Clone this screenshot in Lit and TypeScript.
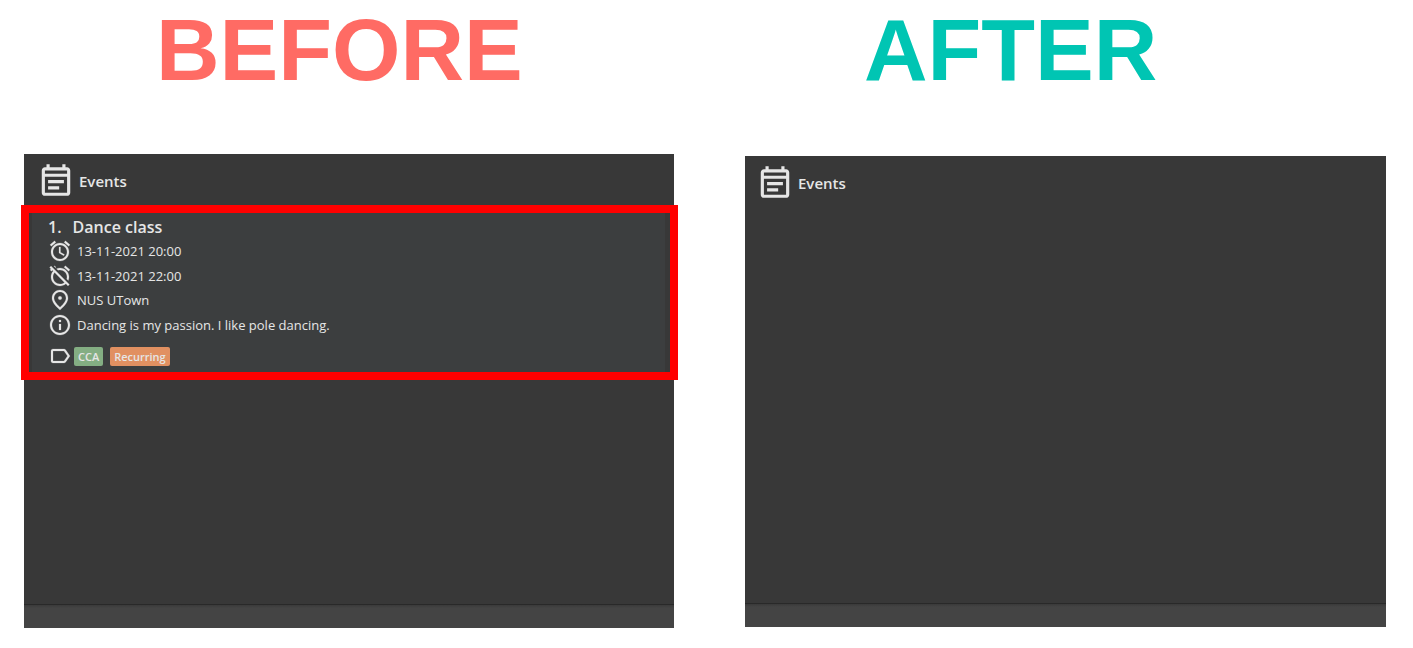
import { LitElement, html, css, svg } from "lit";
import { customElement, property } from "lit/decorators.js";

const ICONS = {
  events: svg`<path d="M19 4h-1V2h-2v2H8V2H6v2H5c-1.11 0-1.99.9-1.99 2L3 20c0 1.1.89 2 2 2h14c1.1 0 2-.9 2-2V6c0-1.1-.9-2-2-2zm0 16H5V10h14v10zm0-12H5V6h14v2zM7 12h10v2H7zm0 4h7v2H7z"/>`,
  start: svg`<path d="M22 5.72l-4.6-3.86-1.29 1.53 4.6 3.86L22 5.72zM7.88 3.39L6.6 1.86 2 5.71l1.29 1.53 4.59-3.85zM12.5 8H11v6l4.75 2.85.75-1.23-4-2.37V8zM12 4c-4.97 0-9 4.03-9 9s4.02 9 9 9c4.97 0 9-4.03 9-9s-4.03-9-9-9zm0 16c-3.87 0-7-3.13-7-7s3.13-7 7-7 7 3.13 7 7-3.13 7-7 7z"/>`,
  end: svg`<path d="M10.04 6.29C10.66 6.11 11.32 6 12 6c3.86 0 7 3.14 7 7 0 .68-.11 1.34-.29 1.96l1.56 1.56c.47-1.08.73-2.27.73-3.52 0-4.97-4.03-9-9-9-1.25 0-2.44.26-3.53.72l1.57 1.57zm7.297-4.48l4.607 3.845-1.28 1.535-4.61-3.843zM3.02 2.1L1.61 3.51l1.37 1.37-.92.77 1.28 1.54 1.06-.88.8.8C3.83 8.69 3 10.75 3 13c0 4.97 4.03 9 9 9 2.25 0 4.31-.83 5.89-2.2l2.1 2.1 1.41-1.41L3.02 2.1zM12 20c-3.86 0-7-3.14-7-7 0-1.7.61-3.26 1.62-4.47l9.85 9.85C15.26 19.39 13.7 20 12 20zM7.48 3.73l.46-.38-1.28-1.54-.6.5z"/>`,
  place: svg`<path d="M12 2C7.8 2 4 5.2 4 10.2c0 3.3 2.7 7.2 8 11.8 5.3-4.6 8-8.5 8-11.8C20 5.2 16.2 2 12 2zm0 17.3c-4-3.7-6-6.7-6-9.1C6 6.6 8.65 4 12 4s6 2.6 6 6.2c0 2.4-2 5.4-6 9.1z"/><circle cx="12" cy="10" r="1.8"/>`,
  info: svg`<path d="M11 7h2v2h-2zm0 4h2v6h-2zm1-9C6.48 2 2 6.48 2 12s4.48 10 10 10 10-4.48 10-10S17.52 2 12 2zm0 18c-4.41 0-8-3.59-8-8s3.59-8 8-8 8 3.59 8 8-3.59 8-8 8z"/>`,
  label: svg`<path d="M17.63 5.84C17.27 5.33 16.67 5 16 5L5 5.01C3.9 5.01 3 5.9 3 7v10c0 1.1.9 1.99 2 1.99L16 19c.67 0 1.27-.33 1.63-.84L22 12l-4.37-6.16zM16 17H5V7h11l3.55 5L16 17z"/>`,
};

type IconName = keyof typeof ICONS;

interface Tag {
  text: string;
  tone: string;
}

interface CalendarEvent {
  title: string;
  details: { icon: IconName; text: string }[];
  tags: Tag[];
}

const DANCE_CLASS: CalendarEvent = {
  title: "Dance class",
  details: [
    { icon: "start", text: "13-11-2021 20:00" },
    { icon: "end", text: "13-11-2021 22:00" },
    { icon: "place", text: "NUS UTown" },
    { icon: "info", text: "Dancing is my passion. I like pole dancing." },
  ],
  tags: [
    { text: "CCA", tone: "green" },
    { text: "Recurring", tone: "orange" },
  ],
};

const icon = (name: IconName) =>
  html`<svg class="icon" viewBox="0 0 24 24" aria-hidden="true">${ICONS[name]}</svg>`;

@customElement("events-panel")
export class EventsPanel extends LitElement {
  @property({ attribute: false }) events: CalendarEvent[] = [];

  static styles = css`
    :host {
      display: flex;
      flex-direction: column;
      background: #383838;
      color: #e6e6e6;
      font-family: "Open Sans", sans-serif;
    }
    .icon {
      flex: none;
      width: 24px;
      height: 24px;
      fill: currentColor;
      stroke: currentColor;
      stroke-width: 0.2;
    }
    .header {
      display: flex;
      align-items: center;
      gap: 4px;
      height: 51px;
      padding-left: var(--header-inset, 13px);
    }
    .header .icon {
      width: 38px;
      height: 38px;
      stroke: none;
    }
    .name {
      margin: 0;
      font-size: 15px;
      line-height: 20px;
      font-weight: 600;
      padding-top: 2px;
    }
    .events {
      list-style: none;
      margin: 0 -4px 0 -3px;
      padding: 0;
    }
    .event {
      border: 8px solid #ff0000;
      padding: 0 5px 0 3px;
    }
    .card {
      background: #3c3e3f;
      padding: 2px 16px 4px;
    }
    .title {
      display: flex;
      gap: 11px;
      margin: 0;
      font-size: 16px;
      line-height: 24px;
      font-weight: 600;
    }
    .details {
      display: grid;
      grid-auto-rows: 1fr;
      height: 98px;
      list-style: none;
      margin: 0;
      padding: 0;
      font-size: 13px;
    }
    .detail {
      display: flex;
      align-items: center;
      gap: 5px;
    }
    .tags {
      display: flex;
      align-items: center;
      margin-top: 7px;
    }
    .tag {
      margin: 0 5px 0 2px;
      padding: 0 4px;
      border-radius: 2px;
      font-size: 11px;
      line-height: 19px;
      font-weight: 600;
    }
    .green {
      background: #84ae83;
    }
    .orange {
      background: #e19061;
    }
    .status {
      height: 23px;
      margin-top: auto;
      border-top: 1px solid #292929;
      background: linear-gradient(#3a3a3a, #444444 3px);
    }
  `;

  render() {
    return html`
      <header class="header">${icon("events")}<h2 class="name">Events</h2></header>
      <ol class="events">
        ${this.events.map(
          (event, i) => html`
            <li class="event">
              <article class="card">
                <h3 class="title"><span>${i + 1}.</span><span>${event.title}</span></h3>
                <ul class="details">
                  ${event.details.map(
                    (d) => html`<li class="detail">${icon(d.icon)}<span>${d.text}</span></li>`
                  )}
                </ul>
                <div class="tags">
                  ${icon("label")}${event.tags.map(
                    (t) => html`<span class="tag ${t.tone}">${t.text}</span>`
                  )}
                </div>
              </article>
            </li>
          `
        )}
      </ol>
      <footer class="status"></footer>
    `;
  }
}

@customElement("app-root")
export class AppRoot extends LitElement {
  static styles = css`
    :host {
      display: block;
      min-height: 100vh;
      box-sizing: border-box;
      padding: 0 27px 20px 24px;
      background: #ffffff;
    }
    .comparison {
      display: grid;
      grid-template-columns: 650fr 641fr;
      column-gap: 71px;
    }
    .side {
      display: flex;
      flex-direction: column;
    }
    .heading {
      margin: 0;
      font: bold 88px/100px "Liberation Sans", Arial, sans-serif;
    }
    .before .heading {
      padding-left: 132px;
      margin-bottom: 54px;
      color: #ff6b64;
    }
    .after .heading {
      padding-left: 119px;
      margin-bottom: 56px;
      color: #00c5b3;
    }
    .before .panel {
      min-height: 474px;
    }
    .after .panel {
      --header-inset: 11px;
      min-height: 471px;
    }
  `;

  render() {
    return html`
      <main class="comparison">
        <section class="side before">
          <h1 class="heading">BEFORE</h1>
          <events-panel class="panel" .events=${[DANCE_CLASS]}></events-panel>
        </section>
        <section class="side after">
          <h1 class="heading">AFTER</h1>
          <events-panel class="panel"></events-panel>
        </section>
      </main>
    `;
  }
}
